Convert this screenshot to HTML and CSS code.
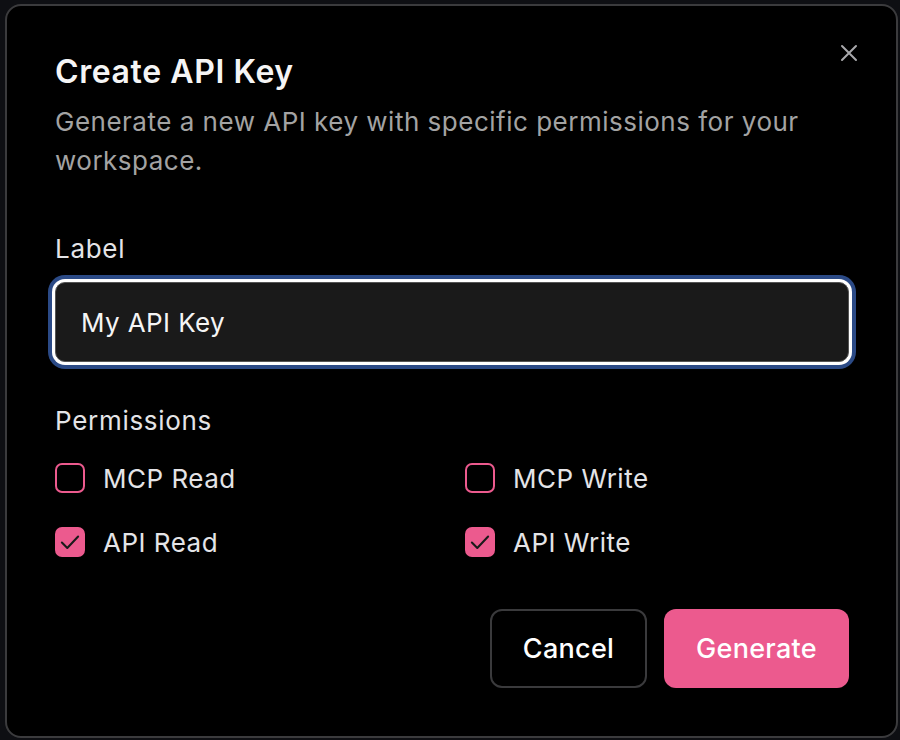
FILE: index.html
```html
<!DOCTYPE html>
<html lang="en">
<head>
<meta charset="utf-8">
<title>Create API Key</title>
<link rel="stylesheet" href="styles.css">
</head>
<body>
<div class="dialog" role="dialog" aria-labelledby="dlg-title">
  <button class="close" aria-label="Close">
    <svg viewBox="0 0 24 24" width="24" height="24" fill="none" stroke="currentColor" stroke-width="2" stroke-linecap="round"><path d="M5 5L19 19M19 5L5 19"/></svg>
  </button>
  <h2 id="dlg-title" class="title">Create API Key</h2>
  <p class="desc">Generate a new API key with specific permissions for your workspace.</p>

  <label class="field-label" for="label-input">Label</label>
  <input id="label-input" class="text-input" type="text" value="My API Key">

  <div class="field-label perms-label">Permissions</div>
  <div class="perms">
    <label class="perm"><span class="box"></span><span>MCP Read</span></label>
    <label class="perm"><span class="box"></span><span>MCP Write</span></label>
    <label class="perm"><span class="box checked"><svg viewBox="0 0 24 24" width="26" height="26" fill="none" stroke="#1a1a1a" stroke-width="1.9" stroke-linecap="round" stroke-linejoin="round"><path d="M4.5 12.5l5 5L19.5 7"/></svg></span><span>API Read</span></label>
    <label class="perm"><span class="box checked"><svg viewBox="0 0 24 24" width="26" height="26" fill="none" stroke="#1a1a1a" stroke-width="1.9" stroke-linecap="round" stroke-linejoin="round"><path d="M4.5 12.5l5 5L19.5 7"/></svg></span><span>API Write</span></label>
  </div>

  <div class="actions">
    <button class="btn btn-cancel">Cancel</button>
    <button class="btn btn-primary">Generate</button>
  </div>
</div>
</body>
</html>
```
FILE: styles.css
```css
* { box-sizing: border-box; }
html, body { margin: 0; padding: 0; }
body {
  background: #0e0f13;
  font-family: Inter, "Noto Sans", sans-serif;
  width: 900px;
  height: 740px;
  overflow: hidden;
}
.dialog {
  position: relative;
  margin: 4px 0 0 5px;
  width: 893px;
  height: 734px;
  background: #000;
  border: 2px solid #3b3b3d;
  border-radius: 16px;
  padding: 48px 47px 48px 48px;
  display: flex;
  flex-direction: column;
}
.close {
  position: absolute;
  top: 34px;
  right: 34px;
  width: 26px;
  height: 26px;
  padding: 0;
  background: none;
  border: none;
  color: #a8a8ab;
  display: flex;
  align-items: center;
  justify-content: center;
}
.title {
  margin: 0;
  font-size: 32px;
  line-height: 36px;
  font-weight: 600;
  color: #f5f5f5;
  letter-spacing: 0.6px;
}
.desc {
  margin: 12px 0 0;
  font-size: 26px;
  line-height: 39px;
  color: #a3a3a3;
  letter-spacing: 0.5px;
  max-width: 790px;
}
.field-label {
  display: block;
  margin-top: 53px;
  font-size: 26px;
  line-height: 32px;
  color: #e4e4e7;
  letter-spacing: 0.7px;
}
.text-input {
  margin-top: 17px;
  width: 100%;
  height: 80px;
  background: #1a1a1a;
  border: 1px solid #555;
  border-radius: 10px;
  padding: 0 25px;
  font-family: inherit;
  font-size: 26px;
  letter-spacing: 0.4px;
  color: #f5f5f5;
  box-shadow: 0 0 0 3px #fff, 0 0 0 7px #2b4a86;
  outline: none;
}
.perms-label { margin-top: 43px; }
.perms {
  margin-top: 25px;
  display: grid;
  grid-template-columns: 1fr 1fr;
  column-gap: 26px;
  row-gap: 32px;
}
.perm {
  display: flex;
  align-items: center;
  gap: 18px;
  height: 32px;
  font-size: 26px;
  letter-spacing: 0.5px;
  color: #e4e4e7;
}
.box {
  width: 30px;
  height: 30px;
  border: 2px solid #ec5a8e;
  border-radius: 7px;
  display: flex;
  align-items: center;
  justify-content: center;
  flex: none;
}
.box.checked { background: #ec5a8e; }
.actions {
  margin-top: 51px;
  display: flex;
  justify-content: flex-end;
  gap: 17px;
}
.btn {
  height: 79px;
  border-radius: 12px;
  font-family: inherit;
  font-size: 27px;
  font-weight: 500;
  letter-spacing: 0.3px;
  color: #fff;
  padding: 0;
}
.btn-cancel {
  width: 157px;
  background: #000;
  border: 2px solid #3a3a3c;
}
.btn-primary {
  width: 185px;
  background: #ec5a8e;
  border: none;
}
```
